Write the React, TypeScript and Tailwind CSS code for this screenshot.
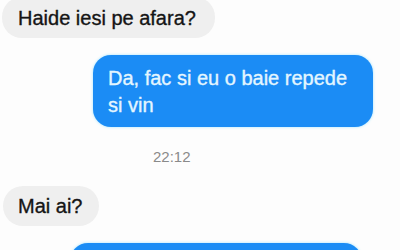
export default function App() {
  return (
    <div className="w-[400px] h-[250px] overflow-hidden bg-[#fdfdfd] font-['Liberation_Sans',Arial,sans-serif] [-webkit-text-stroke:0.35px]">
      <div className="flex flex-col">
        {/* primit */}
        <div className="self-start ml-[2px] -mt-[3px] h-[41px] flex items-center pl-[16px] pr-[19px] rounded-[20px] bg-[#efefef] text-[20px] text-[#151515]">
          Haide iesi pe afara?
        </div>

        {/* trimis */}
        <div className="self-end mr-[27px] mt-[17px] w-[280px] h-[72px] rounded-[18px] bg-[#1b8cf5] shadow-[0_0_3px_#9fe3ff] px-[15px] pt-[10px] text-[20px] leading-[27px] text-[#e4f6ff]">
          Da, fac si eu o baie repede si vin
        </div>

        <div className="mt-[19px] ml-[153px] text-[15px] text-[#8a8a8a] [-webkit-text-stroke:0px]">22:12</div>

        {/* primit */}
        <div className="self-start ml-[3px] mt-[17px] h-[40px] flex items-center pl-[15px] pr-[17px] rounded-[20px] bg-[#efefef] text-[20px] text-[#151515]">
          Mai ai?
        </div>

        {/* trimis */}
        <div className="self-end mr-[38px] mt-[17px] w-[292px] h-[40px] rounded-[18px] bg-[#1b8cf5] shadow-[0_0_3px_#9fe3ff]" />
      </div>
    </div>
  );
}
